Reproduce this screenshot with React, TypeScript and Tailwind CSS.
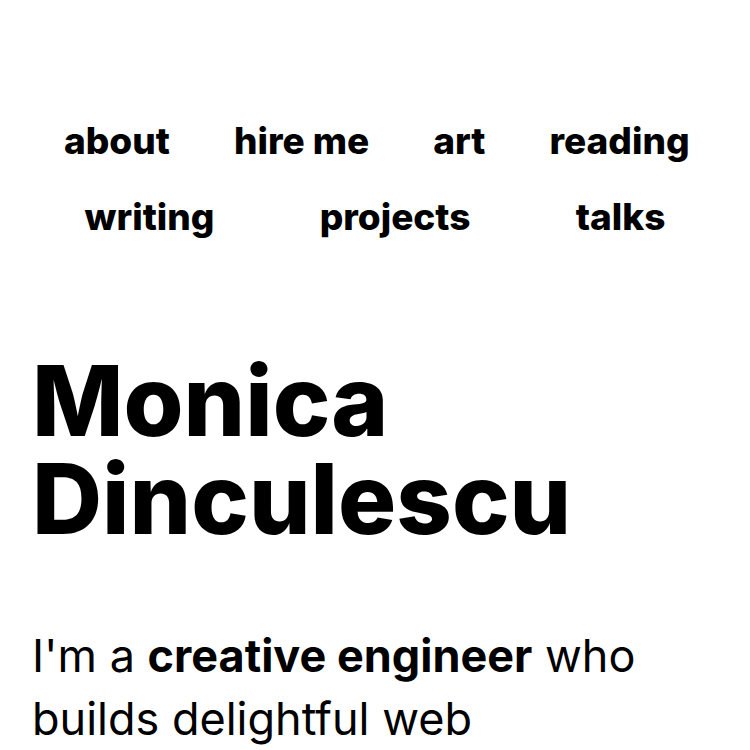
import React from "react";

const font = { fontFamily: "Inter, 'Noto Sans', sans-serif" };

export default function App() {
  const row1 = ["about", "hire me", "art", "reading"];
  const row2 = ["writing", "projects", "talks"];
  return (
    <div className="min-h-[750px] bg-white text-black px-8" style={font}>
      <nav className="pt-[103px]">
        <div className="flex justify-around h-[76px] items-center">
          {row1.map((t) => (
            <a key={t} className="mx-8 text-[37px] font-extrabold leading-[76px] whitespace-nowrap">
              {t}
            </a>
          ))}
        </div>
        <div className="flex justify-around h-[76px] items-center">
          {row2.map((t) => (
            <a key={t} className="mx-8 text-[37px] font-extrabold leading-[76px] whitespace-nowrap">
              {t}
            </a>
          ))}
        </div>
      </nav>
      <h1 className="mt-[97px] text-[97px] font-extrabold leading-[98px]">
        Monica
        <br />
        Dinculescu
      </h1>
      <p className="mt-[76px] text-[45px] leading-[63px]">
        I'm a <strong className="font-bold">creative engineer</strong> who builds delightful web
      </p>
    </div>
  );
}
